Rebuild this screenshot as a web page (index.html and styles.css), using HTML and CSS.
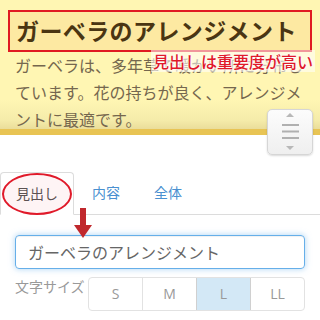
FILE: index.html
```html
<!DOCTYPE html>
<html lang="ja">
<head>
<meta charset="utf-8">
<link rel="stylesheet" href="styles.css">
</head>
<body>
<div class="stage">
  <section class="article">
    <h1 class="title">ガーベラのアレンジメント</h1>
    <p class="body-text">ガーベラは、多年草で暖かい所に分布しています。花の持ちが良く、アレンジメントに最適です。</p>
    <span class="note">見出しは重要度が高い</span>
  </section>
  <div class="band"></div>
  <div class="handle">
    <svg width="46" height="46" viewBox="0 0 46 46">
      <polygon points="23,4 27,8 19,8" fill="#b8b8b8"/>
      <rect x="15" y="15" width="17" height="2" fill="#b0b0b0"/>
      <rect x="15" y="21.5" width="17" height="2" fill="#b0b0b0"/>
      <rect x="15" y="28" width="17" height="2" fill="#b0b0b0"/>
      <polygon points="19,37 27,37 23,41" fill="#b8b8b8"/>
    </svg>
  </div>

  <nav class="tabs">
    <span class="tab active">見出し</span>
    <span class="tab">内容</span>
    <span class="tab">全体</span>
    <span class="circle"></span>
    <svg class="arrow" width="18" height="31" viewBox="0 0 18 31">
      <rect x="6" y="0" width="6" height="18" fill="#c0282d"/>
      <polygon points="0,17 18,17 9,30" fill="#c0282d"/>
    </svg>
  </nav>

  <div class="form">
    <div class="input">ガーベラのアレンジメント</div>
    <div class="size-row">
      <span class="size-label">文字サイズ</span>
      <div class="seg">
        <span class="seg-btn">S</span>
        <span class="seg-btn">M</span>
        <span class="seg-btn on">L</span>
        <span class="seg-btn">LL</span>
      </div>
    </div>
  </div>
</div>
</body>
</html>
```
FILE: styles.css
```css
* { box-sizing: border-box; }
html, body { margin: 0; padding: 0; background: #fff; }
body {
  font-family: "Noto Sans CJK JP", "Noto Sans", sans-serif;
  width: 320px;
  height: 320px;
  overflow: hidden;
  text-spacing-trim: space-all;
}
.stage { position: relative; width: 320px; }

.article {
  position: relative;
  height: 129px;
  padding: 10px 8px 0;
  background: linear-gradient(to bottom, #fff6b3 0px, #fff6b3 100px, #f5ecaa 120px, #eadd9a 129px);
  overflow: hidden;
}
.title {
  margin: 0;
  height: 42px;
  border: 2px solid #e01a22;
  background: #fde9a2;
  color: #4a3512;
  font-size: 23px;
  font-weight: 700;
  line-height: 37px;
  padding-left: 6px;
  letter-spacing: 0.4px;
  white-space: nowrap;
}
.body-text {
  margin: 0;
  padding: 0 0 0 7px;
  width: 299px;
  color: #75674e;
  font-size: 16px;
  line-height: 27px;
  letter-spacing: 0;
  text-spacing-trim: space-all;
}
.note {
  position: absolute;
  left: 151px;
  top: 50px;
  color: #e01a2a;
  font-size: 16px;
  font-weight: 500;
  line-height: 22px;
  padding: 0 2px;
  background: rgba(255,255,255,0.55);
  text-shadow: 0 0 2px #fff, 0 0 2px #fff, 0 0 3px #fff;
  white-space: nowrap;
}
.handle {
  position: absolute;
  left: 267px;
  top: 109px;
  width: 46px;
  height: 46px;
  border: 1px solid #d6d6d6;
  border-radius: 5px;
  background: linear-gradient(#fcfcfc, #efefef);
  box-shadow: 0 1px 2px rgba(0,0,0,0.15);
  z-index: 3;
}
.handle svg { display: block; margin: -1px; }
.band { height: 6px; background: #e8c454; }

.tabs {
  position: relative;
  display: flex;
  align-items: flex-end;
  margin-top: 38px;
  height: 42px;
  border-bottom: 1px solid #dcdcdc;
}
.tab {
  display: block;
  height: 42px;
  padding: 0 17px;
  line-height: 40px;
  font-size: 14px;
  color: #4a90d0;
  white-space: nowrap;
}
.tab.active {
  color: #555;
  width: 74px;
  padding: 0;
  text-align: center;
  border: 1px solid #dcdcdc;
  border-bottom-color: transparent;
  border-radius: 4px 4px 0 0;
  margin-bottom: -1px;
  height: 43px;
  background: #fff;
}
.tab:nth-child(2) { padding-left: 18px; }
.circle {
  position: absolute;
  left: 2px;
  top: 0px;
  width: 70px;
  height: 42px;
  border: 2px solid #e01a2a;
  border-radius: 50%;
  background: rgba(230, 40, 60, 0.05);
}
.arrow {
  position: absolute;
  left: 74px;
  top: 35px;
  z-index: 4;
}

.form { padding: 20px 15px 0; }
.input {
  height: 34px;
  border: 1px solid #66afe9;
  border-radius: 4px;
  box-shadow: 0 0 6px rgba(102,175,233,0.55), inset 0 1px 1px rgba(0,0,0,0.06);
  padding-left: 12px;
  line-height: 32px;
  font-size: 16px;
  color: #666;
}
.size-row {
  display: flex;
  align-items: flex-start;
  margin-top: 8px;
}
.size-label {
  width: 73px;
  font-size: 14px;
  color: #999;
  line-height: 18px;
}
.seg {
  flex: 1;
  display: flex;
  height: 34px;
  border: 1px solid #e2e2e2;
  border-radius: 4px;
  overflow: hidden;
}
.seg-btn {
  flex: 1;
  text-align: center;
  line-height: 32px;
  font-size: 14px;
  color: #999;
  font-family: "Open Sans", "Noto Sans", sans-serif;
  border-left: 1px solid #e2e2e2;
}
.seg-btn:first-child { border-left: none; }
.seg-btn.on { background: #d3e8f6; border-left-color: #d0d0d0; border-right: 1px solid #d0d0d0; }
.seg-btn.on + .seg-btn { border-left: none; }
```
